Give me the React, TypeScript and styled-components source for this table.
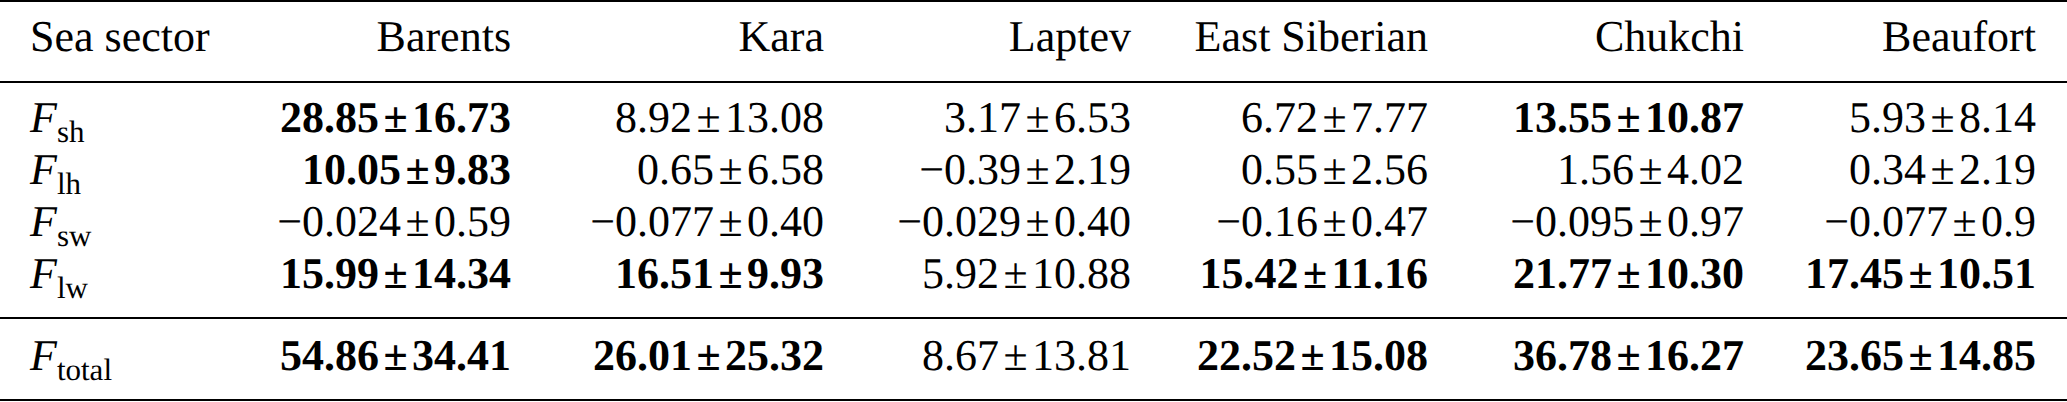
import React from "react";
import styled, { createGlobalStyle } from "styled-components";

type Entry = {
  mean: string;
  sd: string;
  bold?: boolean;
};

type FluxRow = {
  sub: string;
  values: Entry[];
};

const seas = ["Barents", "Kara", "Laptev", "East Siberian", "Chukchi", "Beaufort"];

const fluxRows: FluxRow[] = [
  {
    sub: "sh",
    values: [
      { mean: "28.85", sd: "16.73", bold: true },
      { mean: "8.92", sd: "13.08" },
      { mean: "3.17", sd: "6.53" },
      { mean: "6.72", sd: "7.77" },
      { mean: "13.55", sd: "10.87", bold: true },
      { mean: "5.93", sd: "8.14" },
    ],
  },
  {
    sub: "lh",
    values: [
      { mean: "10.05", sd: "9.83", bold: true },
      { mean: "0.65", sd: "6.58" },
      { mean: "−0.39", sd: "2.19" },
      { mean: "0.55", sd: "2.56" },
      { mean: "1.56", sd: "4.02" },
      { mean: "0.34", sd: "2.19" },
    ],
  },
  {
    sub: "sw",
    values: [
      { mean: "−0.024", sd: "0.59" },
      { mean: "−0.077", sd: "0.40" },
      { mean: "−0.029", sd: "0.40" },
      { mean: "−0.16", sd: "0.47" },
      { mean: "−0.095", sd: "0.97" },
      { mean: "−0.077", sd: "0.9" },
    ],
  },
  {
    sub: "lw",
    values: [
      { mean: "15.99", sd: "14.34", bold: true },
      { mean: "16.51", sd: "9.93", bold: true },
      { mean: "5.92", sd: "10.88" },
      { mean: "15.42", sd: "11.16", bold: true },
      { mean: "21.77", sd: "10.30", bold: true },
      { mean: "17.45", sd: "10.51", bold: true },
    ],
  },
];

const totalRow: FluxRow = {
  sub: "total",
  values: [
    { mean: "54.86", sd: "34.41", bold: true },
    { mean: "26.01", sd: "25.32", bold: true },
    { mean: "8.67", sd: "13.81" },
    { mean: "22.52", sd: "15.08", bold: true },
    { mean: "36.78", sd: "16.27", bold: true },
    { mean: "23.65", sd: "14.85", bold: true },
  ],
};

const GlobalStyle = createGlobalStyle`
  body {
    margin: 0;
    background: #ffffff;
    color: #000000;
  }
`;

const Table = styled.div`
  width: 2067px;
  border-top: 2px solid #000;
  border-bottom: 2px solid #000;
  font-family: "Liberation Serif", "Times New Roman", serif;
  font-size: 44px;
  line-height: 52px;
  text-rendering: geometricPrecision;
`;

const Section = styled.div<{ $top: number; $bottom: number; $rule?: boolean }>`
  padding-top: ${(p) => p.$top}px;
  padding-bottom: ${(p) => p.$bottom}px;
  border-bottom: ${(p) => (p.$rule ? "2px solid #000" : "none")};
`;

const Row = styled.div`
  display: grid;
  grid-template-columns: 170px 311px 313px 307px 297px 316px 292px;
  padding: 0 31px 0 30px;
  height: 52px;
`;

const Cell = styled.div<{ $left?: boolean }>`
  text-align: ${(p) => (p.$left ? "left" : "right")};
  white-space: nowrap;
`;

const Num = styled.span<{ $bold?: boolean }>`
  font-weight: ${(p) => (p.$bold ? 700 : 400)};
`;

const PlusMinus = styled.span`
  margin: 0 0.1em;
`;

const Italic = styled.i`
  font-style: italic;
`;

const Sub = styled.span`
  font-size: 31px;
  line-height: 0;
  vertical-align: -10px;
`;

const Value = ({ entry }: { entry: Entry }) => (
  <Num $bold={entry.bold}>
    {entry.mean}
    <PlusMinus>±</PlusMinus>
    {entry.sd}
  </Num>
);

const Flux = ({ sub }: { sub: string }) => (
  <>
    <Italic>F</Italic>
    <Sub>{sub}</Sub>
  </>
);

const DataRow = ({ row }: { row: FluxRow }) => (
  <Row>
    <Cell $left>
      <Flux sub={row.sub} />
    </Cell>
    {row.values.map((v, i) => (
      <Cell key={i}>
        <Value entry={v} />
      </Cell>
    ))}
  </Row>
);

export default function App() {
  return (
    <>
      <GlobalStyle />
      <Table>
        <Section $top={9} $bottom={18} $rule>
          <Row>
            <Cell $left>Sea sector</Cell>
            {seas.map((s) => (
              <Cell key={s}>{s}</Cell>
            ))}
          </Row>
        </Section>
        <Section $top={9} $bottom={17} $rule>
          {fluxRows.map((r) => (
            <DataRow key={r.sub} row={r} />
          ))}
        </Section>
        <Section $top={11} $bottom={17}>
          <DataRow row={totalRow} />
        </Section>
      </Table>
    </>
  );
}
